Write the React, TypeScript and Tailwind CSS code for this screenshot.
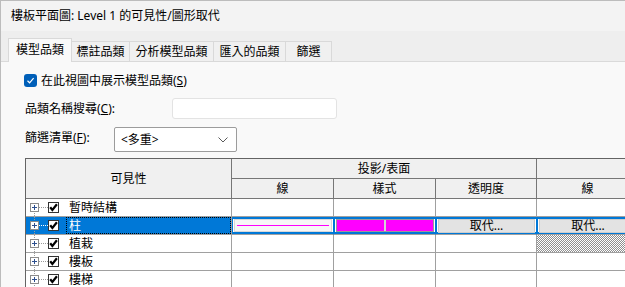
import React from "react";

const rows = [
  { name: "暫時結構" },
  { name: "柱", selected: true },
  { name: "植栽", hatch: true },
  { name: "樓板" },
  { name: "樓梯" },
];

const tabs = [
  { label: "模型品類", w: "w-[64px]", active: true },
  { label: "標註品類", w: "w-[58px]" },
  { label: "分析模型品類", w: "w-[84px]" },
  { label: "匯入的品類", w: "w-[72px]" },
  { label: "篩選", w: "w-[46px]" },
];

function TreeNode({ first, selected }: { first?: boolean; selected?: boolean }) {
  const dot = selected ? "#ffffff" : "#9a9a9a";
  return (
    <svg width="22" height="17" className="shrink-0" shapeRendering="crispEdges">
      <line x1="8.5" y1={first ? 8 : 0} x2="8.5" y2="17" stroke="#9a9a9a" strokeDasharray="1 1" />
      <line x1="13" y1="8.5" x2="22" y2="8.5" stroke={dot} strokeDasharray="1 1" />
      <rect x="4.5" y="4.5" width="8" height="8" fill="#ffffff" stroke="#8c8c8c" />
      <line x1="6" y1="8.5" x2="11" y2="8.5" stroke="#2d4f8f" />
      <line x1="8.5" y1="6" x2="8.5" y2="11" stroke="#2d4f8f" />
    </svg>
  );
}

function TreeCheck() {
  return (
    <svg width="11" height="11" className="shrink-0">
      <rect x="0.5" y="0.5" width="10" height="10" fill="#ffffff" stroke="#333333" />
      <path d="M2.2 5.2 L4.4 8 L8.9 2.3" fill="none" stroke="#000000" strokeWidth="2.2" />
    </svg>
  );
}

function Head({ children, className = "" }: { children?: React.ReactNode; className?: string }) {
  return (
    <div className={`border-r border-b border-[#767676] bg-[#f0f0f0] flex items-center justify-center text-[12px] leading-none ${className}`}>
      {children}
    </div>
  );
}

function Override() {
  return (
    <div className="flex-1 mx-[1px] h-[14px] bg-[#e3e3e3] border border-[#cdcdcd] text-[12px] leading-none flex items-center justify-center">
      取代...
    </div>
  );
}

export default function App() {
  return (
    <div className="w-[625px] h-[287px] overflow-hidden bg-[#f9f9f9] border-l border-t border-[#bcbcbc] text-black font-['Noto_Sans','Noto_Sans_CJK_TC',sans-serif]">
      {/* Title */}
      <div className="h-[30px] bg-[#f3f3f3] flex items-center pl-[10px] text-[12px] leading-none">
        樓板平面圖: Level 1 的可見性/圖形取代
      </div>

      {/* Tabs */}
      <div className="h-[31px] bg-[#eeeeee] flex items-end">
        <div className="w-[7px] h-px bg-[#dadada]" />
        {tabs.map((t, i) => (
          <div
            key={t.label}
            className={`${t.w} flex items-center justify-center text-[12px] leading-none border-t border-r border-[#d9d9d9] ${
              i === 0 ? "border-l" : ""
            } ${t.active ? "h-[24px] bg-[#f9f9f9] pb-[1px]" : "h-[21px] bg-[#f0f0f0] border-b"}`}
          >
            {t.label}
          </div>
        ))}
        <div className="flex-1 h-px bg-[#dadada]" />
      </div>

      {/* Panel */}
      <div className="pl-[23px]">
        <div className="mt-[10px] h-[17px] flex items-center text-[12px] leading-none">
          <div className="w-[13px] h-[13px] rounded-[3px] bg-[#005fb8] flex items-center justify-center">
            <svg width="9" height="9" viewBox="0 0 9 9">
              <path d="M1.5 4.8 L3.6 6.8 L7.6 2.2" fill="none" stroke="#ffffff" strokeWidth="1.2" />
            </svg>
          </div>
          <span className="ml-[4px]">
            在此視圖中展示模型品類(<span className="underline">S</span>)
          </span>
        </div>

        <div className="mt-[9px] h-[21px] flex items-center text-[12px] leading-none">
          <span className="w-[148px] pl-[1px]">
            品類名稱搜尋(<span className="underline">C</span>):
          </span>
          <div className="w-[165px] h-[21px] bg-white border border-[#e3e3e3] rounded-[3px]" />
        </div>

        <div className="mt-[8px] h-[25px] flex items-start text-[12px]">
          <span className="w-[90px] pl-[1px] mt-[2px] h-[17px] leading-[17px]">
            篩選清單(<span className="underline">F</span>):
          </span>
          <div className="w-[123px] h-[25px] bg-white border border-[#9c9c9c] rounded-[2px] flex items-center pl-[6px] pr-[8px]">
            <span className="flex-1 leading-none">&lt;多重&gt;</span>
            <svg width="10" height="6" viewBox="0 0 10 6">
              <path d="M0.5 0.5 L5 5 L9.5 0.5" fill="none" stroke="#5a5a5a" strokeWidth="1" />
            </svg>
          </div>
        </div>

        {/* Table */}
        <div className="mt-[6px] ml-[1px] w-max grid grid-cols-[206px_102px_102px_101px_102px] grid-rows-[20px_20px_18px_18px_18px_18px_18px] border-t border-l border-[#646464]">
          <Head className="row-span-2">可見性</Head>
          <Head className="col-span-3">投影/表面</Head>
          <Head />
          <Head>線</Head>
          <Head>樣式</Head>
          <Head>透明度</Head>
          <Head>線</Head>

          {rows.map((r, i) => (
            <React.Fragment key={r.name}>
              <div
                className={`border-r border-b border-[#a0a0a0] flex items-center text-[12px] ${
                  r.selected ? "bg-[#0078d7] text-white" : "bg-white"
                }`}
              >
                <TreeNode first={i === 0} selected={r.selected} />
                <TreeCheck />
                <div
                  className={`ml-[7px] flex-1 h-full flex items-center pl-[2px] leading-none border border-dotted ${
                    r.selected ? "border-black" : "border-transparent"
                  }`}
                >
                  {r.name}
                </div>
              </div>
              {r.selected ? (
                <>
                  <div className="border-r border-b border-b-[#a0a0a0] border-r-[#0078d7] bg-white">
                    <div className="h-full border-y-2 border-l border-[#0078d7] flex items-center">
                      <div className="flex-1 mx-[1px] h-[13px] border border-[#d8d8d8] bg-[#f7f7f7] flex items-center px-[2px]">
                        <svg width="100%" height="1" className="block" shapeRendering="crispEdges">
                          <rect x="0" y="0" width="100%" height="1" fill="#ff00ff" />
                        </svg>
                      </div>
                    </div>
                  </div>
                  <div className="border-r border-b border-b-[#a0a0a0] border-r-[#0078d7] bg-white">
                    <div className="h-full border-y-2 border-l border-[#0078d7] flex items-center">
                      <div className="flex-1 mx-[1px] h-[13px] border border-[#9a9a9a] flex">
                        <div className="flex-1 bg-[#ff00ff]" />
                        <div className="w-[2px] bg-[#d4d4d4]" />
                        <div className="flex-1 bg-[#ff00ff]" />
                      </div>
                    </div>
                  </div>
                  <div className="border-r border-b border-b-[#a0a0a0] border-r-[#0078d7] bg-white">
                    <div className="h-full border-y-2 border-l border-[#0078d7] flex items-center">
                      <Override />
                    </div>
                  </div>
                  <div className="border-r border-b border-b-[#a0a0a0] border-r-[#0078d7] bg-white">
                    <div className="h-full border-y-2 border-l border-[#0078d7] flex items-center">
                      <Override />
                    </div>
                  </div>
                </>
              ) : (
                <>
                  <div className="border-r border-b border-[#a0a0a0] bg-white" />
                  <div className="border-r border-b border-[#a0a0a0] bg-white" />
                  <div className="border-r border-b border-[#a0a0a0] bg-white" />
                  <div
                    className={`border-r border-b border-[#a0a0a0] ${
                      r.hatch
                        ? "bg-[image:repeating-conic-gradient(#8f8f8f_0%_25%,#ffffff_0%_50%)] bg-[length:2px_2px]"
                        : "bg-white"
                    }`}
                  />
                </>
              )}
            </React.Fragment>
          ))}
        </div>
      </div>
    </div>
  );
}
